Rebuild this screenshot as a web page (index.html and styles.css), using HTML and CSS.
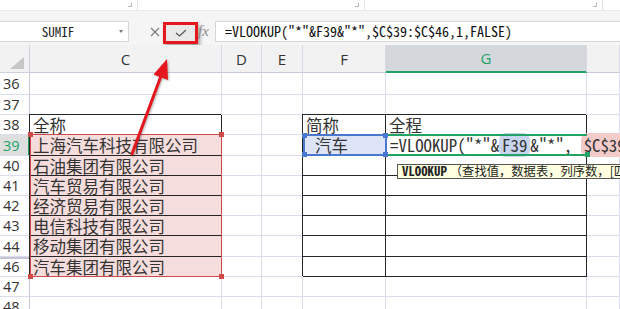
FILE: index.html
```html
<!DOCTYPE html>
<html lang="zh-CN">
<head>
  <meta charset="UTF-8" />
  <title>VLOOKUP 通配符</title>
  <link rel="stylesheet" href="styles.css">
</head>
<body>
  <div class="ribbon">
    <div class="grp g1"><i class="launch"></i></div>
    <div class="grp g2"><i class="launch"></i></div>
    <div class="grp g3"><i class="launch"></i></div>
  </div>

  <div class="fbar">
    <div class="namebox"><span class="nm">SUMIF</span><i class="dd"></i></div>
    <svg class="xbtn" width="10" height="10" viewBox="0 0 10 10"><path d="M1 1L9 9M9 1L1 9" stroke="#7a7a7a" stroke-width="1.1" fill="none"/></svg>
    <div class="ok">
      <svg width="12" height="8" viewBox="0 0 12 8"><path d="M1 4L4.5 7L11 1" stroke="#555" stroke-width="1.2" fill="none"/></svg>
    </div>
    <span class="fx">fx</span>
    <div class="finput">=VLOOKUP("*"&amp;F39&amp;"*",$C$39:$C$46,1,FALSE)</div>
  </div>

  <div class="sheet">
    <div class="cells">
      <!-- header -->
      <div class="c corner"><svg width="14" height="12" viewBox="0 0 14 12"><polygon points="14,0 14,12 0,12" fill="#c6c6c6"/></svg></div>
      <div class="c hd">C</div>
      <div class="c hd">D</div>
      <div class="c hd">E</div>
      <div class="c hd">F</div>
      <div class="c hd on">G</div>
      <div class="c hd"></div>

      <div class="c rh">36</div><div class="c"></div><div class="c"></div><div class="c"></div><div class="c"></div><div class="c"></div><div class="c"></div>
      <div class="c rh">37</div><div class="c"></div><div class="c"></div><div class="c"></div><div class="c"></div><div class="c"></div><div class="c"></div>

      <div class="c rh">38</div>
      <div class="c tb zh">全称</div>
      <div class="c"></div><div class="c"></div>
      <div class="c tb zh">简称</div>
      <div class="c tb zh">全程</div>
      <div class="c"></div>

      <div class="c rh on">39</div>
      <div class="c tb pk zh">上海汽车科技有限公司</div>
      <div class="c"></div><div class="c"></div>
      <div class="c tb cur zh ind">汽车</div>
      <div class="c tb edit">
        <span class="fm">=VLOOKUP("*"&amp;<span class="ref rf">F39</span>&amp;"*", <span class="ref rc">$C$39:$C$46</span></span>
        <div class="tip"><b>VLOOKUP</b><span>（查找值，数据表，列序数，[匹配条件]）</span></div>
      </div>
      <div class="c"></div>

      <div class="c rh">40</div><div class="c tb pk zh">石油集团有限公司</div><div class="c"></div><div class="c"></div><div class="c tb"></div><div class="c tb"></div><div class="c"></div>
      <div class="c rh">41</div><div class="c tb pk zh">汽车贸易有限公司</div><div class="c"></div><div class="c"></div><div class="c tb"></div><div class="c tb"></div><div class="c"></div>
      <div class="c rh">42</div><div class="c tb pk zh">经济贸易有限公司</div><div class="c"></div><div class="c"></div><div class="c tb"></div><div class="c tb"></div><div class="c"></div>
      <div class="c rh">43</div><div class="c tb pk zh">电信科技有限公司</div><div class="c"></div><div class="c"></div><div class="c tb"></div><div class="c tb"></div><div class="c"></div>
      <div class="c rh">44</div><div class="c tb pk zh">移动集团有限公司</div><div class="c"></div><div class="c"></div><div class="c tb"></div><div class="c tb"></div><div class="c"></div>
      <div class="c rh hid">46</div><div class="c tb pk zh">汽车集团有限公司</div><div class="c"></div><div class="c"></div><div class="c tb"></div><div class="c tb"></div><div class="c"></div>
      <div class="c rh">47</div><div class="c"></div><div class="c"></div><div class="c"></div><div class="c"></div><div class="c"></div><div class="c"></div>
      <div class="c rh">48</div><div class="c"></div><div class="c"></div><div class="c"></div><div class="c"></div><div class="c"></div><div class="c"></div>
    </div>

    <!-- selection marks, laid on the same grid -->
    <div class="marks">
      <div class="sel selc"><i class="h tl"></i><i class="h tr"></i><i class="h bl"></i><i class="h br"></i></div>
      <div class="sel self"><i class="h tl"></i><i class="h tr"></i><i class="h bl"></i><i class="h br"></i></div>
      <div class="sel selg"><i class="h br"></i></div>
    </div>
  </div>

  <svg class="arrow" width="620" height="309" viewBox="0 0 620 309">
    <line x1="132" y1="154" x2="161" y2="76" stroke="#e5161e" stroke-width="3" stroke-linecap="round"/>
    <polygon points="167,59 168,80 153.5,74.5" fill="#e5161e"/>
  </svg>
</body>
</html>
```

FILE: styles.css
```css
* {
  box-sizing: border-box;
}
body {
  margin: 0;
  width: 620px;
  height: 309px;
  overflow: hidden;
  background: #fff;
  font-family: 'Open Sans', sans-serif;
  color: #333;
  position: relative;
}

/* ribbon strip */
.ribbon {
  display: flex;
  height: 11px;
  border-bottom: 1px solid #ebebeb;
}
.grp {
  display: flex;
  justify-content: flex-end;
  border-right: 1px solid #e2e2e2;
  padding: 3px 5px 0 0;
}
.g1 { width: 138px; }
.g2 { width: 227px; }
.g3 { width: 238px; }
.launch {
  width: 4px;
  height: 4px;
  border-right: 1px solid #b8b8b8;
  border-bottom: 1px solid #b8b8b8;
}

/* formula bar */
.fbar {
  display: flex;
  align-items: flex-start;
  height: 34px;
  padding-top: 10px;
  background: #f5f5f5;
}
.namebox {
  width: 129px;
  height: 21px;
  display: flex;
  align-items: center;
  background: #fff;
  border: 1px solid #d6d6d6;
  border-left: 0;
  font: 13px 'Noto Sans Mono CJK SC', monospace;
  color: #222;
}
.nm {
  flex: 1;
  text-align: center;
}
.dd {
  width: 0;
  height: 0;
  margin: 0 5px 0 3px;
  border-left: 2.5px solid transparent;
  border-right: 2.5px solid transparent;
  border-top: 3px solid #777;
}
.xbtn {
  margin: 6px 3px 0 21px;
}
.ok {
  width: 35px;
  height: 22px;
  margin-top: 1px;
  display: flex;
  align-items: center;
  justify-content: center;
  background: #e9e9e9;
  border: 3px solid #e5161e;
  box-shadow: 2px 3px 4px rgba(0,0,0,0.35);
}
.fx {
  width: 10px;
  margin: 2px 7px 0 0;
  font: italic 15px 'Liberation Serif', serif;
  color: #8c8c8c;
}
.finput {
  flex: 1;
  height: 21px;
  padding-left: 9px;
  background: #fff;
  border: 1px solid #d6d6d6;
  border-right: 0;
  font: 14px/19px 'Noto Sans Mono CJK SC', monospace;
  color: #111;
  white-space: nowrap;
}

/* sheet */
.sheet {
  position: relative;
  height: 264px;
  overflow: hidden;
}
.cells, .marks {
  display: grid;
  grid-template-columns: 30px 192px 40px 41px 83px 201px 33px;
  grid-template-rows: 28px 22px 20px 20px 21px 20px 20px 20px 20px 21px 20px 20px 20px;
}
.marks {
  position: absolute;
  inset: 0;
  pointer-events: none;
}
.c {
  display: flex;
  align-items: center;
  min-width: 0;
  white-space: nowrap;
  border-right: 1px solid #dcdcef;
  border-bottom: 1px solid #dcdcef;
}
.corner {
  background: #f2f2f2;
  padding: 12px 0 0 10px;
  align-items: flex-start;
  border-color: #cfcfe0;
}
.hd {
  justify-content: center;
  background: #f2f2f2;
  font-size: 15px;
  color: #333;
  border-right-color: #d8d8e6;
  border-bottom-color: #c8c8dc;
}
.hd.on {
  background: #d4d7dc;
  color: #21a366;
  border-bottom: 2px solid #21a366;
}
.rh {
  padding-left: 3px;
  font-size: 14.5px;
  color: #333;
  border-right-color: #c8c8dc;
}
.rh.on {
  background: #dedede;
  color: #21a366;
  border-right: 2px solid #21a366;
}
.rh.hid {
  box-shadow: inset 0 2px 0 #c4c4d4;
}
.zh {
  padding-left: 3px;
  font: 16.5px 'Noto Sans CJK SC', sans-serif;
  color: #333;
}
.ind {
  padding-left: 12px;
}
.tb {
  border-right-color: #262626;
  border-bottom-color: #262626;
  box-shadow: -1px -1px 0 #262626;
}
.pk {
  background: #f5dddd;
}
.cur {
  background: #dde4f5;
}

/* cell in edit mode */
.edit {
  position: relative;
  padding-left: 4px;
  overflow: visible;
}
.fm {
  font: 16.8px 'Noto Sans Mono CJK SC', monospace;
  color: #333;
}
.ref {
  border-radius: 7px;
  padding: 0 3px;
}
.rf { background: #c8d5ef; }
.rc { background: #f3cbca; }
.tip {
  position: absolute;
  left: 11px;
  top: 29px;
  height: 15px;
  display: flex;
  align-items: center;
  padding-left: 4px;
  background: #ffffe1;
  border: 1px solid #555;
  color: #222;
  white-space: nowrap;
}
.tip b {
  font: bold 12.8px/1 'Noto Sans Mono CJK SC', monospace;
}
.tip span {
  margin-left: 3px;
  font: 12.3px/1 'Noto Sans CJK SC', sans-serif;
}

/* selections */
.sel {
  position: relative;
}
.selc {
  grid-column: 2;
  grid-row: 5 / 12;
  margin-top: -1px;
  border: 1px solid #d04a4a;
}
.selc .h { background: #d04a4a; }
.self {
  grid-column: 5;
  grid-row: 5;
  margin: -1px -1px 0 0;
  border: 2px solid #4a78d0;
}
.self .h { background: #4a78d0; }
.selg {
  grid-column: 6;
  grid-row: 5;
  margin: -1px 0 0 2px;
  border-top: 2px solid #21a366;
  border-bottom: 2px solid #21a366;
}
.selg .h { background: #21a366; }
.h {
  position: absolute;
  width: 5px;
  height: 5px;
}
.tl { left: -3px; top: -3px; }
.tr { right: -3px; top: -3px; }
.bl { left: -3px; bottom: -3px; }
.br { right: -3px; bottom: -3px; }

/* annotation arrow */
.arrow {
  position: absolute;
  left: 0;
  top: 0;
  pointer-events: none;
  filter: drop-shadow(1px 1px 1px rgba(0,0,0,0.3));
}
```
